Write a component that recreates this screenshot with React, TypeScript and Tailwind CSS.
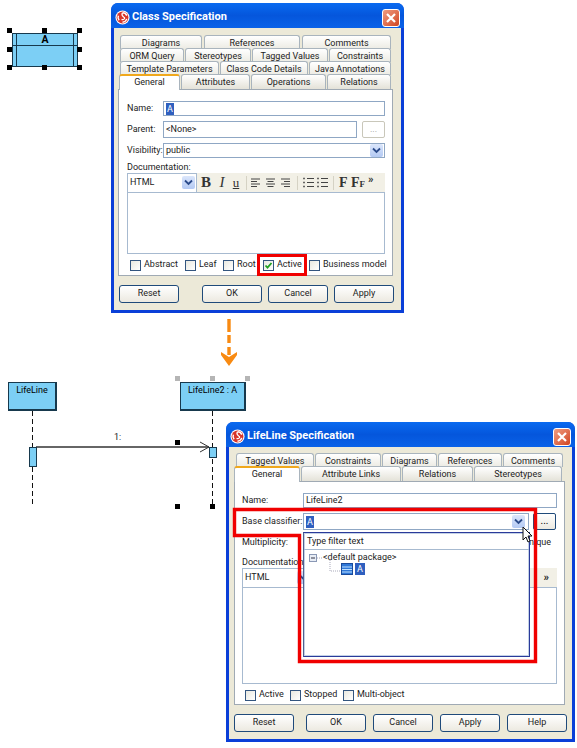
import type { ReactNode } from "react";

const font = { fontFamily: 'Roboto, "Liberation Sans", sans-serif' };
const serif = { fontFamily: '"Liberation Serif", serif' };

const Logo = () => (
  <svg width="15" height="15" viewBox="0 0 16 16" className="shrink-0">
    <circle cx="8" cy="8" r="7.5" fill="#fff" />
    <circle cx="8" cy="8" r="6.3" fill="#d8362a" />
    <path d="M8 3a5 5 0 0 1 4.6 3M12.6 9.5A5 5 0 0 1 8 13M4.4 11A5 5 0 0 1 3.6 6" fill="none" stroke="#fff" strokeWidth="1.5" />
    <path d="M8 3C6 6 9 7 10 8s-1 3-3 2" fill="none" stroke="#fff" strokeWidth="1.3" />
  </svg>
);

const TitleBar = ({ title }: { title: string }) => (
  <div className="h-[25px] shrink-0 flex items-center pt-[4px] pl-[4px] pr-[4px] rounded-t-[7px] bg-gradient-to-b from-[#0a6af0] via-[#0556dc] to-[#0a62e8]">
    <Logo />
    <span className="ml-[2px] text-[11px] font-bold text-white flex-1">{title}</span>
    <div className="w-[18px] h-[18px] rounded-[3px] border border-white bg-gradient-to-br from-[#ee9c80] to-[#d0421c] flex items-center justify-center">
      <svg width="12" height="12" viewBox="0 0 12 12">
        <path d="M2 2l8 8M10 2l-8 8" stroke="#fff" strokeWidth="2.2" />
      </svg>
    </div>
  </div>
);

type TabDef = [string, number];

const TabRow = ({ tabs, left, gap = 1 }: { tabs: TabDef[]; left: number; gap?: number }) => (
  <div className="flex h-[13px] overflow-visible" style={{ paddingLeft: left, columnGap: gap }}>
    {tabs.map(([label, w]) => (
      <div
        key={label}
        style={{ width: w }}
        className="h-[14px] shrink-0 rounded-t-[3px] border border-b-0 border-[#a9b4bd] bg-gradient-to-b from-white to-[#ecebe3] text-center text-[9px] leading-[15px] text-[#222] whitespace-nowrap overflow-hidden"
      >
        {label}
      </div>
    ))}
  </div>
);

const ActiveRow = ({ active, activeW, tabs, gap = 1 }: { active: string; activeW: number; tabs: TabDef[]; gap?: number }) => (
  <div className="flex h-[15px] items-end relative" style={{ columnGap: gap }}>
    <div
      style={{ width: activeW }}
      className="relative z-10 h-[16px] -mb-px rounded-t-[3px] border-x border-[#a9b4bd] border-t-2 border-t-[#f0a81c] bg-white text-center text-[9px] leading-[13px] text-[#222] shrink-0"
    >
      {active}
    </div>
    {tabs.map(([label, w]) => (
      <div
        key={label}
        style={{ width: w }}
        className="h-[15px] shrink-0 rounded-t-[3px] border border-b-0 border-[#a9b4bd] bg-gradient-to-b from-white to-[#e4e2d8] text-center text-[9px] leading-[15px] text-[#222] whitespace-nowrap overflow-hidden"
      >
        {label}
      </div>
    ))}
  </div>
);

const DropArrow = () => (
  <div className="w-[13px] h-[13px] rounded-[2px] bg-gradient-to-b from-[#dbe6fb] to-[#b3c9f3] flex items-center justify-center shrink-0">
    <svg width="9" height="7" viewBox="0 0 9 7">
      <path d="M1 1.5l3.5 3.5L8 1.5" fill="none" stroke="#2a4a8a" strokeWidth="1.8" />
    </svg>
  </div>
);

const Selected = ({ children }: { children: string }) => (
  <span className="bg-[#2f5fbf] text-white px-px leading-[12px]">{children}</span>
);

const Separator = ({ className }: { className: string }) => <div className={`w-px h-[14px] bg-[#d5d2c4] ${className}`} />;

const Toolbar = ({ compact }: { compact?: boolean }) => (
  <div className="h-[19px] bg-[#f2f0e6] flex items-center">
    <div className="w-[70px] h-[20px] shrink-0 bg-white border border-[#a7bad0] flex items-center justify-between pl-[2px] pr-[1px] text-[9px] text-[#222]">
      <span>HTML</span>
      <DropArrow />
    </div>
    {compact ? (
      <span className="ml-auto mr-[8px] text-[11px] font-bold text-[#222] leading-none">»</span>
    ) : (
      <div className="flex items-center ml-[4px] text-[#333]">
        <span className="w-[14px] text-[15px] font-bold" style={serif}>B</span>
        <span className="w-[14px] text-[15px] italic text-center" style={serif}>I</span>
        <span className="w-[14px] text-[13px] underline text-center" style={serif}>u</span>
        <Separator className="mx-[3px]" />
        {["M1 1h9M1 3.5h6M1 6h9M1 8.5h6", "M1 1h9M2.5 3.5h6M1 6h9M2.5 8.5h6", "M1 1h9M4 3.5h6M1 6h9M4 8.5h6"].map((d) => (
          <svg key={d} width="11" height="10" viewBox="0 0 11 10" className="mr-[4px]">
            <path d={d} stroke="#444" strokeWidth="1" />
          </svg>
        ))}
        <Separator className="ml-[2px] mr-[5px]" />
        {[0, 1].map((k) => (
          <svg key={k} width="11" height="11" viewBox="0 0 11 11" className="mr-[3px]">
            <path d="M4 1.5h7M4 5.5h7M4 9.5h7" stroke="#444" strokeWidth="1" />
            <path d="M1 .8v1.4M1 4.8v1.4M1 8.8v1.4" stroke="#444" strokeWidth="1.6" />
          </svg>
        ))}
        <Separator className="ml-[2px] mr-[5px]" />
        <span className="w-[12px] text-[14px] font-bold" style={serif}>F</span>
        <span className="w-[17px] text-[14px] font-bold" style={serif}>
          F<span className="text-[9px]">F</span>
        </span>
        <span className="text-[11px] font-bold leading-none -mt-[6px]">»</span>
      </div>
    )}
  </div>
);

const Check = ({ label, w, checked }: { label: string; w: number; checked?: boolean }) => (
  <div className="flex items-center shrink-0" style={{ width: w }}>
    <div className="w-[11px] h-[11px] border border-[#33557f] bg-gradient-to-br from-[#e8e8e0] to-white flex items-center justify-center shrink-0">
      {checked && (
        <svg width="9" height="9" viewBox="0 0 9 9">
          <path d="M1.5 4.5l2 2.2L7.5 2" fill="none" stroke="#21a121" strokeWidth="1.8" />
        </svg>
      )}
    </div>
    <span className="ml-[3px] text-[9px] text-[#222] whitespace-nowrap">{label}</span>
  </div>
);

const XpButton = ({ label, w }: { label: string; w: number }) => (
  <div
    style={{ width: w }}
    className="h-[18px] shrink-0 rounded-[3px] border border-[#1f4a7a] bg-gradient-to-b from-white to-[#ece9e0] text-center text-[9px] leading-[15px] text-[#222]"
  >
    {label}
  </div>
);

const Row = ({ label, labelW, mt, h, children }: { label: string; labelW: number; mt: number; h: number; children: ReactNode }) => (
  <div className="flex items-center" style={{ marginTop: mt, height: h }}>
    <span className="text-[9px] text-[#222] shrink-0 whitespace-nowrap" style={{ width: labelW }}>
      {label}
    </span>
    {children}
  </div>
);

const inputBox = "h-full border border-[#8fa7c4] bg-white flex items-center pl-[2px] text-[9px] text-[#222]";

const Dialog = ({ className, children }: { className: string; children: ReactNode }) => (
  <div className={`absolute flex flex-col rounded-t-[7px] bg-[#0a3fd8] ${className}`}>{children}</div>
);

const Handle = ({ className }: { className: string }) => <div className={`absolute w-[5px] h-[5px] ${className}`} />;

const ClassNode = () => (
  <>
    <div className="absolute left-[12px] top-[33px] w-[66px] h-[34px] bg-[#7ccff5] border border-[#17394d] flex flex-col">
      <div className="h-[12px] border-b border-[#17394d] text-center text-[10.5px] font-bold leading-[11px] text-black">A</div>
      <div className="absolute left-[3px] top-0 bottom-0 w-px bg-[#17394d]" />
      <div className="absolute right-[3px] top-0 bottom-0 w-px bg-[#17394d]" />
    </div>
    {["left-[7px] top-[28px]", "left-[42px] top-[28px]", "left-[77px] top-[28px]", "left-[7px] top-[47px]", "left-[77px] top-[47px]", "left-[7px] top-[65px]", "left-[42px] top-[65px]", "left-[77px] top-[65px]"].map((p) => (
      <Handle key={p} className={`bg-black ${p}`} />
    ))}
  </>
);

const Sequence = () => (
  <>
    <svg className="absolute left-0 top-0" width="577" height="748">
      <path d="M32.5 411V505M212.5 411V505" stroke="#111" strokeWidth="1" strokeDasharray="5 3" fill="none" />
      <path d="M36 447H209" stroke="#333" strokeWidth="1.3" fill="none" />
      <path d="M200 442l9 5-9 5" stroke="#333" strokeWidth="1" fill="none" />
      <path d="M229 319v13M229 335v8M229 347v8" stroke="#f88a12" strokeWidth="3.4" fill="none" />
      <path d="M221 352l8 5 8-5v3l-8 11-8-11z" fill="#f88a12" />
    </svg>
    <div className="absolute left-[8px] top-[382px] w-[49px] h-[29px] bg-[#7ccff5] border border-[#17394d] border-r-2 border-b-2 text-center text-[9px] leading-[14px] text-black">LifeLine</div>
    <div className="absolute left-[180px] top-[382px] w-[66px] h-[29px] bg-[#7ccff5] border border-[#17394d] border-r-2 border-b-2 text-center text-[9px] leading-[14px] text-black">LifeLine2 : A</div>
    <div className="absolute left-[29px] top-[447px] w-[8px] h-[20px] bg-[#7ccff5] border border-[#17394d]" />
    <div className="absolute left-[209px] top-[447px] w-[8px] h-[11px] bg-[#7ccff5] border border-[#17394d]" />
    <span className="absolute left-[114px] top-[431px] text-[9px] text-[#222]">1:</span>
    {["left-[175px]", "left-[210px]", "left-[245px]"].map((p) => (
      <Handle key={p} className={`bg-[#b5b5b5] top-[376px] ${p}`} />
    ))}
    {["left-[175px] top-[440px]", "left-[175px] top-[504px]", "left-[210px] top-[504px]"].map((p) => (
      <Handle key={p} className={`bg-black ${p}`} />
    ))}
  </>
);

const ClassDialog = () => (
  <Dialog className="left-[111px] top-[3px] w-[293px] h-[310px]">
    <TitleBar title="Class Specification" />
    <div className="mx-[3px] mb-[3px] flex-1 bg-[#ece9d8] pl-[4px] pt-[7px] flex flex-col">
      <TabRow left={2} gap={2} tabs={[["Diagrams", 82], ["References", 96], ["Comments", 89]]} />
      <TabRow left={2} tabs={[["ORM Query", 64], ["Stereotypes", 66], ["Tagged Values", 76], ["Constraints", 62]]} />
      <TabRow left={2} tabs={[["Template Parameters", 99], ["Class Code Details", 88], ["Java Annotations", 82]]} />
      <div className="pl-px">
        <ActiveRow active="General" activeW={61} gap={1} tabs={[["Attributes", 69], ["Operations", 75], ["Relations", 64]]} />
      </div>
      <div className="w-[275px] h-[187px] bg-white border border-[#a0aab4] pl-[8px] pr-[7px] shrink-0">
        <Row label="Name:" labelW={36} mt={11} h={15}>
          <div className={`${inputBox} flex-1`}><Selected>A</Selected></div>
        </Row>
        <Row label="Parent:" labelW={36} mt={5} h={17}>
          <div className={`${inputBox} w-[194px] bg-[#eceff4]`}>&lt;None&gt;</div>
          <div className="ml-[5px] w-[23px] h-[17px] border border-[#c9c7ba] rounded-[2px] text-center text-[9px] leading-[14px] text-[#999]">...</div>
        </Row>
        <Row label="Visibility:" labelW={36} mt={5} h={15}>
          <div className={`${inputBox} flex-1 justify-between pr-px`}>public<DropArrow /></div>
        </Row>
        <div className="text-[9px] text-[#222] leading-[10px] mt-[4px] h-[11px]">Documentation:</div>
        <Toolbar />
        <div className="h-[62px] border border-[#a7bad0] bg-white" />
        <div className="flex items-center pl-[3px] mt-[4px] h-[14px]">
          <Check label="Abstract" w={55} />
          <Check label="Leaf" w={38} />
          <Check label="Root" w={40} />
          <Check label="Active" w={46} checked />
          <Check label="Business model" w={72} />
        </div>
      </div>
      <div className="flex mt-[9px] pl-px">
        <XpButton label="Reset" w={60} />
        <div className="flex gap-[6px] ml-[23px]">
          <XpButton label="OK" w={60} />
          <XpButton label="Cancel" w={60} />
          <XpButton label="Apply" w={60} />
        </div>
      </div>
    </div>
  </Dialog>
);

const LifeLineDialog = () => (
  <Dialog className="left-[226px] top-[422px] w-[349px] h-[320px]">
    <TitleBar title="LifeLine Specification" />
    <div className="mx-[3px] mb-[3px] flex-1 bg-[#ece9d8] pl-[5px] pt-[6px] flex flex-col">
      <TabRow left={2} tabs={[["Tagged Values", 78], ["Constraints", 66], ["Diagrams", 55], ["References", 64], ["Comments", 60]]} />
      <ActiveRow active="General" activeW={66} tabs={[["Attribute Links", 100], ["Relations", 71], ["Stereotypes", 88]]} />
      <div className="w-[331px] h-[224px] bg-white border border-[#a0aab4] pl-[7px] pr-[7px] shrink-0">
        <Row label="Name:" labelW={61} mt={11} h={15}>
          <div className={`${inputBox} flex-1`}>LifeLine2</div>
        </Row>
        <Row label="Base classifier:" labelW={61} mt={5} h={17}>
          <div className={`${inputBox} w-[226px] justify-between pr-[3px]`}>
            <Selected>A</Selected>
            <DropArrow />
          </div>
          <div className="ml-[4px] w-[23px] h-[17px] border border-[#1f4a7a] rounded-[2px] bg-gradient-to-b from-white to-[#ece9e0] text-center text-[10px] leading-[14px]">...</div>
        </Row>
        <Row label="Multiplicity:" labelW={61} mt={5} h={16}>
          <span className="ml-auto mr-[6px] text-[9px] text-[#222]">Unique</span>
        </Row>
        <div className="text-[9px] text-[#222] leading-[10px] mt-[6px] h-[11px]">Documentation:</div>
        <Toolbar compact />
        <div className="h-[97px] border border-[#a7bad0] bg-white" />
        <div className="flex items-center pl-[3px] mt-[4px] h-[14px]">
          <Check label="Active" w={45} />
          <Check label="Stopped" w={53} />
          <Check label="Multi-object" w={80} />
        </div>
      </div>
      <div className="flex mt-[9px] gap-[7px]">
        <XpButton label="Reset" w={60} />
        <div className="flex gap-[7px] ml-[5px]">
          <XpButton label="OK" w={60} />
          <XpButton label="Cancel" w={60} />
          <XpButton label="Apply" w={60} />
          <XpButton label="Help" w={60} />
        </div>
      </div>
    </div>
  </Dialog>
);

const ClassifierPopup = () => (
  <div className="absolute left-[303px] top-[532px] w-[227px] h-[125px] bg-white border border-[#2a3a9a] border-l-[#50608f] shadow-[inset_0_0_0_1px_#c3d1e6] flex flex-col">
    <div className="h-[17px] border-b border-[#a7bad0] pl-[3px] text-[9px] leading-[17px] text-[#222]">Type filter text</div>
    <div className="relative flex-1">
      <svg className="absolute left-[5px] top-[3px]" width="40" height="26" viewBox="0 0 40 26">
        <rect x="0.5" y="1.5" width="7" height="7" fill="#e8edf5" stroke="#8a98b5" />
        <path d="M2 5h4" stroke="#334" strokeWidth="1" />
        <path d="M8 5h6M21 7v11h11" stroke="#aab" strokeWidth="1" strokeDasharray="1 1" fill="none" />
      </svg>
      <span className="absolute left-[19px] top-[1px] text-[9px] leading-[12px] text-[#222]">&lt;default package&gt;</span>
      <svg className="absolute left-[37px] top-[13px]" width="12" height="12" viewBox="0 0 12 12">
        <rect x="0.5" y="0.5" width="11" height="11" fill="#2f78d8" stroke="#1a4a9a" />
        <path d="M1 4h10M1 6.5h10M1 9h10" stroke="#bfe0ff" strokeWidth="1" />
      </svg>
      <span className="absolute left-[51px] top-[13px] w-[10px] h-[12px] bg-[#2f5fbf] text-white text-center text-[9px] leading-[12px]">A</span>
    </div>
  </div>
);

const Marks = () => (
  <>
    <div className="absolute left-[257px] top-[254px] w-[50px] h-[22px] border-[3px] border-[#f00000]" />
    <svg className="absolute left-0 top-0" width="577" height="748">
      <path d="M234.5 509.5H535.5V661.5H299.5V535.5H234.5Z" fill="none" stroke="#f00000" strokeWidth="3.4" />
      <path d="M523 527v13l3-3 2 5 2-1-2-5h4z" fill="#fff" stroke="#111" strokeWidth="1" />
    </svg>
  </>
);

export default function App() {
  return (
    <div className="relative w-[577px] h-[748px] bg-white overflow-hidden" style={font}>
      <ClassNode />
      <Sequence />
      <ClassDialog />
      <LifeLineDialog />
      <ClassifierPopup />
      <Marks />
    </div>
  );
}
